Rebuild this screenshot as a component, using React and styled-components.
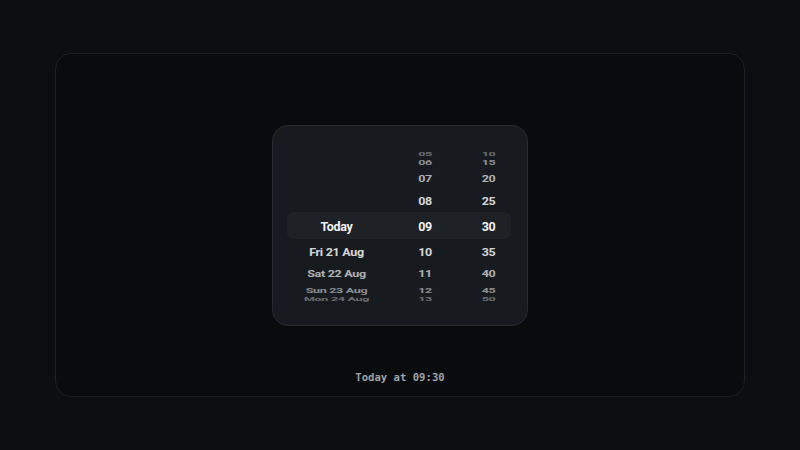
import React from "react";
import styled, { createGlobalStyle } from "styled-components";

const GlobalStyle = createGlobalStyle`
  html, body {
    margin: 0;
    height: 100%;
    background: #0d0e11;
  }
  #root {
    height: 100%;
  }
`;

const RADIUS = 74;
const STEP = 20;
// how flat each row gets as it turns away from the middle
const SQUASH = [1, 0.93, 0.78, 0.62, 0.5];
const FADE = [1, 0.87, 0.7, 0.54, 0.38];

const Page = styled.div`
  height: 100%;
  box-sizing: border-box;
  padding: 53px 55px;
  display: flex;
`;

const Frame = styled.div`
  flex: 1;
  display: grid;
  grid-template-rows: 1fr auto 1fr;
  justify-items: center;
  background: #0a0b0d;
  border: 1px solid #1d1f24;
  border-radius: 16px;
`;

const Card = styled.div`
  grid-row: 2;
  width: 256px;
  box-sizing: border-box;
  padding: 24px 14px 23px 14px;
  background: #171a1e;
  border: 1px solid #262930;
  border-radius: 16px;
`;

const Picker = styled.div`
  display: grid;
  align-items: center;
`;

const Highlight = styled.div`
  grid-area: 1 / 1;
  height: 27px;
  margin-right: 2px;
  border-radius: 7px;
  background: #1e2125;
`;

const Wheels = styled.div`
  grid-area: 1 / 1;
  display: grid;
  grid-template-columns: 99px 78px 49px;
  height: 152px;
  overflow: hidden;
`;

const Wheel = styled.div`
  display: grid;
  align-items: center;
  justify-items: center;
`;

const Item = styled.div`
  grid-area: 1 / 1;
  font-family: Roboto, "Liberation Sans", sans-serif;
  font-weight: 700;
  font-size: 12.5px;
  letter-spacing: -0.3px;
  line-height: 16px;
  white-space: nowrap;
  color: #f1f2f4;
  opacity: ${({ $k }) => FADE[Math.abs($k)]};
  transform: ${({ $k }) => {
    const a = ($k * STEP * Math.PI) / 180;
    return `translateY(${(RADIUS * Math.sin(a) + 0.5).toFixed(2)}px) scaleY(${SQUASH[Math.abs($k)]})`;
  }};
`;

const Caption = styled.div`
  grid-row: 3;
  align-self: end;
  margin-bottom: 12px;
  font-family: "DejaVu Sans Mono", "Liberation Mono", monospace;
  font-size: 10.6px;
  font-weight: 700;
  line-height: 14px;
  color: #9fa2a7;
`;

const offsets = [-4, -3, -2, -1, 0, 1, 2, 3, 4];

const days = {
  0: "Today",
  1: "Fri 21 Aug",
  2: "Sat 22 Aug",
  3: "Sun 23 Aug",
  4: "Mon 24 Aug",
};

const hours = offsets.map((k) => String(9 + k).padStart(2, "0"));
const minutes = offsets.map((k) => String(30 + k * 5).padStart(2, "0"));

function Column({ values }) {
  return (
    <Wheel>
      {offsets.map((k, i) =>
        values[i] ? (
          <Item key={k} $k={k}>
            {values[i]}
          </Item>
        ) : null
      )}
    </Wheel>
  );
}

export default function App() {
  const dayValues = offsets.map((k) => days[k]);
  return (
    <>
      <GlobalStyle />
      <Page>
        <Frame>
          <Card>
            <Picker>
              <Highlight />
              <Wheels>
                <Column values={dayValues} />
                <Column values={hours} />
                <Column values={minutes} />
              </Wheels>
            </Picker>
          </Card>
          <Caption>Today at 09:30</Caption>
        </Frame>
      </Page>
    </>
  );
}
